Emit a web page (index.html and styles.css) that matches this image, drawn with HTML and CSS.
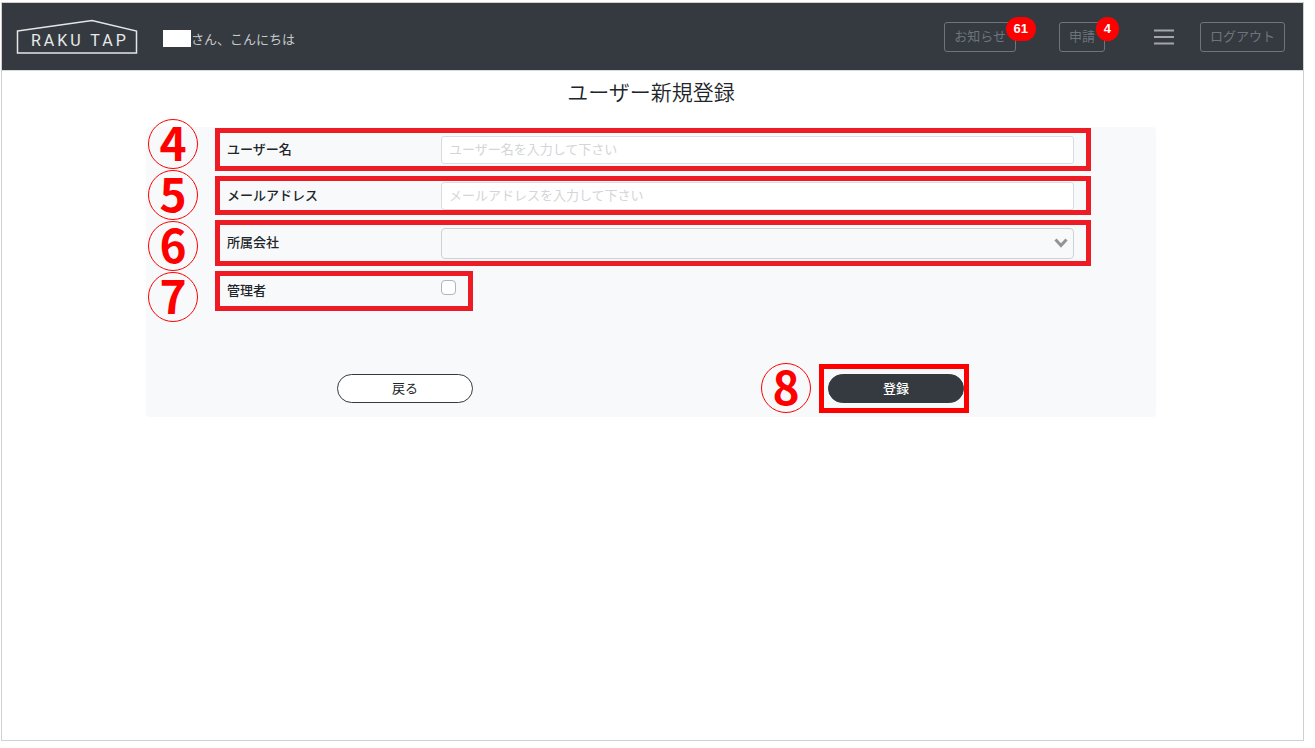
FILE: index.html
```html
<!DOCTYPE html>
<html lang="ja">
<head>
    <meta charset="UTF-8">
    <meta name="viewport" content="width=device-width, initial-scale=1.0">
    <title>ユーザー新規登録 | RAKU TAP</title>
    <link rel="stylesheet" href="styles.css">
</head>
<body>
    <div class="page">
        <header class="header">
            <a href="#" class="logo" aria-label="RAKU TAP">
                <svg width="122" height="36" viewBox="0 0 122 36">
                    <path d="M1.5 12 L76 1.5 L120.500 12 V34 H1.500 Z" fill="none" stroke="#e4e5e6" stroke-width="1.500"/>
                    <text x="15" y="27" class="logo-text">RAKU TAP</text>
                </svg>
            </a>
            <p class="greeting"><span class="user-name"></span>さん、こんにちは</p>
            <nav class="nav">
                <button type="button" class="nav-button news">お知らせ<span class="count">61</span></button>
                <button type="button" class="nav-button request">申請<span class="count">4</span></button>
                <button type="button" class="menu" aria-label="メニュー">
                    <svg width="20" height="16" viewBox="0 0 20 16">
                        <path d="M0 1.500 H20 M0 8 H20 M0 14.500 H20" stroke="#a3a6a9" stroke-width="2"/>
                    </svg>
                </button>
                <button type="button" class="nav-button">ログアウト</button>
            </nav>
        </header>

        <main class="main">
            <h1>ユーザー新規登録</h1>
            <form class="panel">
                <div class="form-body">
                    <div class="steps">
                        <span class="step">4</span>
                        <span class="step">5</span>
                        <span class="step">6</span>
                        <span class="step">7</span>
                    </div>
                    <div class="fields">
                        <div class="field">
                            <label for="userName">ユーザー名</label>
                            <input type="text" id="userName" name="userName" placeholder="ユーザー名を入力して下さい">
                        </div>
                        <div class="field field-mail">
                            <label for="email">メールアドレス</label>
                            <input type="text" id="email" name="email" placeholder="メールアドレスを入力して下さい">
                        </div>
                        <div class="field">
                            <label for="company">所属会社</label>
                            <div class="select-wrap">
                                <select id="company" name="company">
                                    <option value=""></option>
                                </select>
                                <svg class="arrow" width="14" height="10" viewBox="0 0 14 10">
                                    <path d="M1.500 1.500 L7 7.500 L12.500 1.500" fill="none" stroke="#929496" stroke-width="3"/>
                                </svg>
                            </div>
                        </div>
                        <div class="field field-admin">
                            <label for="admin">管理者</label>
                            <input type="checkbox" id="admin" name="admin">
                        </div>
                    </div>
                </div>
                <div class="actions">
                    <button type="button" class="button">戻る</button>
                    <div class="submit-area">
                        <span class="step">8</span>
                        <div class="submit-box">
                            <button type="submit" class="button button-dark">登録</button>
                        </div>
                    </div>
                </div>
            </form>
        </main>
    </div>
</body>
</html>
```
FILE: styles.css
```css
* {
    box-sizing: border-box;
}
body {
    margin: 0;
    padding: 2px 11px 7px 1px;
    min-height: 100vh;
    display: flex;
    background-color: #fff;
    color: #212529;
    font-family: "Noto Sans CJK JP", sans-serif;
    font-size: 13px;
    line-height: 20px;
}
button, input, select {
    font-family: inherit;
    font-size: 13px;
    line-height: 20px;
}
.page {
    flex: 1;
    border: 1px solid #d0d0d0;
}

/* header */
.header {
    display: flex;
    align-items: center;
    min-height: 68px;
    padding: 0 18px 0 14px;
    background-color: #353a40;
    border-bottom: 1px solid #d9dadb;
}
.logo {
    display: flex;
    margin-right: 25px;
}
.logo-text {
    fill: #e8e9ea;
    font-family: Roboto, "Liberation Sans", sans-serif;
    font-size: 16px;
    letter-spacing: 3px;
}
.greeting {
    display: flex;
    align-items: center;
    margin: 4px 0 0;
    color: #c6c8ca;
}
.user-name {
    width: 28px;
    height: 17px;
    background-color: #fff;
}
.nav {
    display: flex;
    align-items: center;
    margin-left: auto;
}
.nav-button {
    position: relative;
    height: 30px;
    padding: 0 9px 2px;
    border: 1px solid #6c757d;
    border-radius: 3px;
    background: none;
    color: #6c757d;
    white-space: nowrap;
}
.news {
    margin-right: 43px;
}
.count {
    position: absolute;
    top: -6px;
    right: -21px;
    padding: 0 8px;
    border-radius: 12px;
    background-color: #f00;
    color: #fff;
    font-family: "Liberation Sans", Arial, sans-serif;
    font-size: 13px;
    font-weight: bold;
    line-height: 24px;
}
.request .count {
    right: -15px;
}
.menu {
    display: flex;
    margin: 0 26px 0 49px;
    padding: 0;
    border: none;
    background: none;
}

/* form */
.main {
    padding: 5px 3px 0 0;
}
h1 {
    margin: 0 0 21px;
    font-size: 21px;
    font-weight: 350;
    line-height: 30px;
    text-align: center;
}
.panel {
    max-width: 1010px;
    margin: 0 auto;
    padding: 1px 65px 4px 2px;
    border-radius: 4px;
    background-color: #f8f9fb;
}
.form-body {
    display: flex;
    gap: 17px;
}
.steps {
    display: flex;
    flex-direction: column;
    gap: 1px;
    margin-top: -9px;
}
.step {
    width: 50px;
    height: 50px;
    border: 1px solid #f00;
    border-radius: 50%;
    color: #f00;
    font-size: 46px;
    font-weight: bold;
    line-height: 42px;
    text-align: center;
}
.fields {
    flex: 1;
    display: flex;
    flex-direction: column;
    gap: 5px;
}
.field {
    display: flex;
    align-items: center;
    padding: 3px 12px 2px 7px;
    border: 5px solid #ed1c24;
}
.field-mail {
    padding-top: 1px;
    padding-bottom: 0;
}
.field-admin {
    align-self: flex-start;
    height: 40px;
}
.field label {
    flex: 0 0 214px;
    padding-bottom: 3px;
    font-weight: 500;
}
.field input[type="text"] {
    flex: 1;
    min-width: 0;
    height: 28px;
    padding: 0 7px 3px;
    border: 1px solid #d9dde1;
    border-radius: 3px;
    background-color: #fff;
}
.field input::placeholder {
    color: #d3d5d7;
    opacity: 1;
}
.select-wrap {
    position: relative;
    flex: 1;
    display: flex;
}
.select-wrap select {
    width: 100%;
    height: 31px;
    padding: 0 30px 0 7px;
    border: 1px solid #cfd2d5;
    border-radius: 4px;
    background-color: #f8f9fb;
    appearance: none;
}
.arrow {
    position: absolute;
    top: 10px;
    right: 6px;
    pointer-events: none;
}
.field input[type="checkbox"] {
    width: 15px;
    height: 15px;
    margin: 0 0 8px;
    border: 1px solid #adb5bd;
    border-radius: 4px;
    background-color: #fff;
    appearance: none;
}
.field input[type="checkbox"]:checked {
    background-color: #353a40;
}
.actions {
    display: flex;
    align-items: center;
    justify-content: space-between;
    margin-top: 41px;
    padding: 0 122px 0 189px;
}
.submit-area {
    display: flex;
    align-items: center;
    gap: 8px;
}
.submit-box {
    padding: 5px 0 5px 4px;
    border: 5px solid #f00;
}
.button {
    display: block;
    width: 136px;
    height: 29px;
    padding: 0;
    border: 1px solid #353a40;
    border-radius: 15px;
    background-color: #fff;
    color: #212529;
    cursor: pointer;
}
.button-dark {
    background-color: #353a40;
    color: #fff;
    font-weight: 500;
}
```
